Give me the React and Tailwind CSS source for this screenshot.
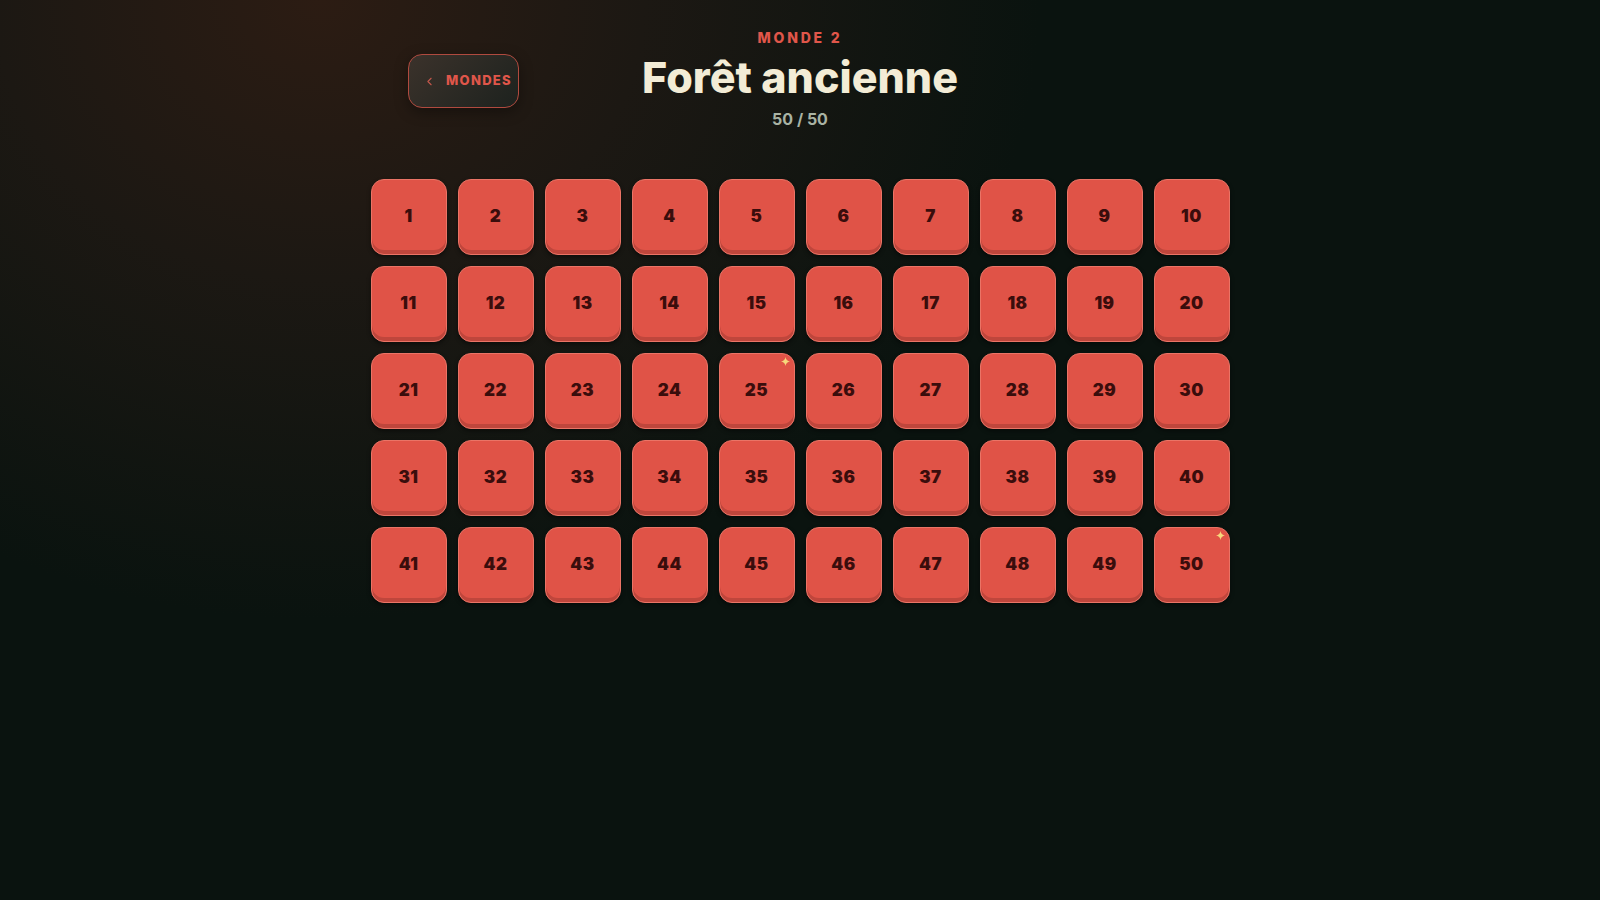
import { ChevronLeft } from "lucide-react";

const starred = [25, 50];

const Sparkle = () => (
  <svg
    viewBox="0 0 10 10"
    className="absolute top-[3px] right-[4px] w-[9px] h-[9px]"
  >
    <path d="M5 0 Q5.6 4.4 10 5 Q5.6 5.6 5 10 Q4.4 5.6 0 5 Q4.4 4.4 5 0 Z" fill="#f6d77c" />
  </svg>
);

const Level = ({ n }) => (
  <button className="relative w-[76px] h-[76px] rounded-[13px] bg-[#e05347] border border-[#ea7466] shadow-[inset_0_-4px_0_#bf463c,0_2px_4px_rgba(0,0,0,0.45)] flex items-center justify-center">
    <span className="text-[17px] font-black text-[#3a0d0c] tracking-[0.03em]">{n}</span>
    {starred.includes(n) && <Sparkle />}
  </button>
);

export default function App() {
  const levels = Array.from({ length: 50 }, (_, i) => i + 1);

  return (
    <div
      className="min-h-screen w-full bg-[#0a130f] bg-[radial-gradient(ellipse_720px_620px_at_320px_0px,#2c1c13_0%,#1c1813_45%,#0a130f_100%)] pt-[28px]"
      style={{ fontFamily: "Inter, 'Noto Sans', sans-serif" }}
    >
      <header className="w-[784px] mx-auto grid grid-cols-[1fr_auto_1fr] items-center">
        <div className="justify-self-start mt-[4px]">
          <button className="w-[111px] h-[54px] rounded-[14px] border border-[#b04a3f] bg-[linear-gradient(135deg,#3b322b_0%,#1d221e_100%)] shadow-[0_4px_14px_rgba(0,0,0,0.35)] flex items-center pl-[14px] gap-[10px]">
            <ChevronLeft className="w-[13px] h-[13px] text-[#c2574b]" strokeWidth={2} />
            <span className="text-[13px] font-extrabold tracking-[0.1em] text-[#e0564a]">MONDES</span>
          </button>
        </div>
        <div className="flex flex-col items-center">
          <p className="text-[14px] leading-[20px] font-extrabold tracking-[0.2em] text-[#e0564a]">MONDE 2</p>
          <h1 className="mt-[3px] text-[43px] leading-[52px] font-extrabold text-[#f3ecd6]">Forêt ancienne</h1>
          <p className="mt-[5px] text-[16px] leading-[22px] font-bold text-[#a9b3a4]">50 / 50</p>
        </div>
        <div />
      </header>

      <div className="w-[859px] mx-auto mt-[49px] grid grid-cols-10 gap-[11px]">
        {levels.map((n) => (
          <Level key={n} n={n} />
        ))}
      </div>
    </div>
  );
}
